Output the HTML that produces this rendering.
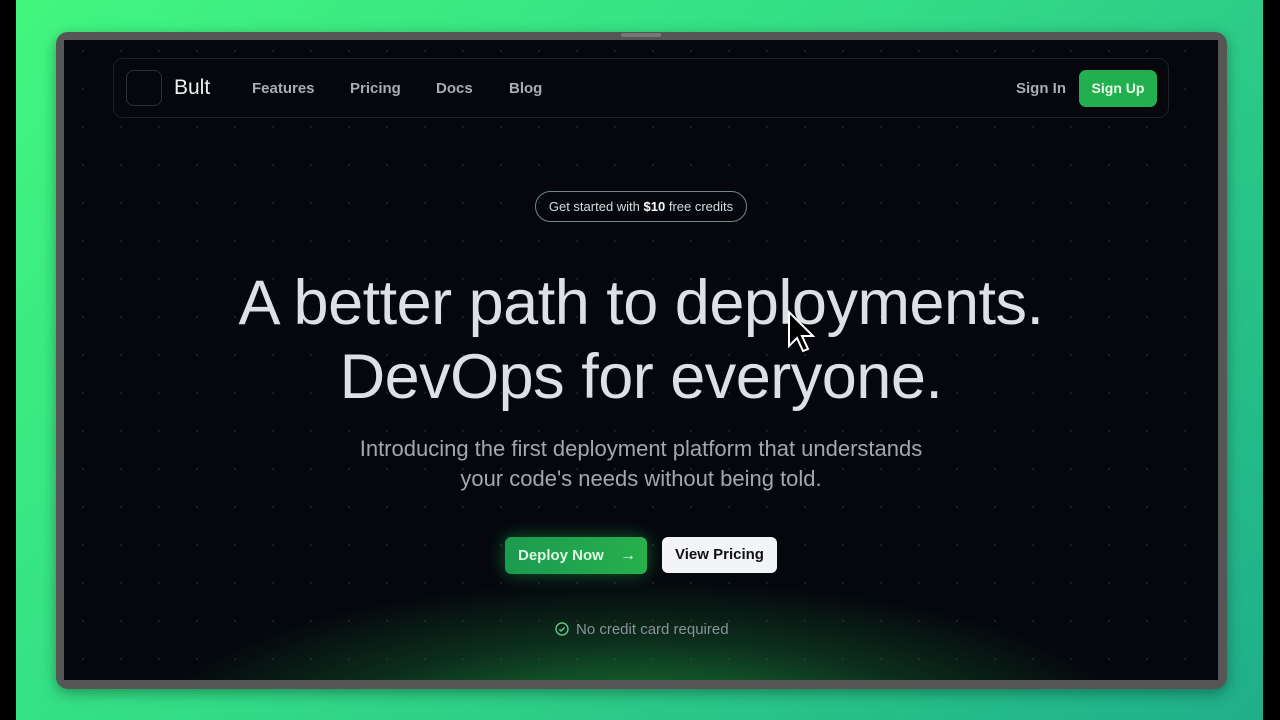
<!DOCTYPE html>
<html><head><meta charset="utf-8"><style>
*{margin:0;padding:0;box-sizing:border-box}
body{width:1280px;height:720px;overflow:hidden;background:#000;font-family:"Liberation Sans",sans-serif;position:relative}
.bg{position:absolute;left:16px;top:0;width:1247px;height:720px;background:linear-gradient(135deg,#42f67f 0%,#33dc86 45%,#1fae8a 100%)}
.frame{position:absolute;left:56px;top:32px;width:1171px;height:657px;background:#565656;border-radius:12px;box-shadow:0 4px 14px rgba(0,0,0,.35)}
.screen{position:absolute;left:64px;top:40px;width:1154px;height:640px;background:#05070d;overflow:hidden;
background-image:radial-gradient(circle,rgba(255,255,255,.09) 1px,transparent 1.3px);background-size:38px 38px;background-position:0 -8px}
.glow{position:absolute;left:0;right:0;bottom:-60px;height:200px;background:radial-gradient(ellipse 55% 100% at 50% 100%,rgba(35,190,80,.75),rgba(25,120,55,.35) 50%,transparent 80%)}
.nav{position:absolute;left:49px;top:18px;width:1056px;height:60px;border:1px solid #1d2128;border-radius:10px;background:#05070d}
.logo{position:absolute;left:12px;top:11px;width:36px;height:36px;border:1px solid #2a2e35;border-radius:8px}
.brand{position:absolute;left:60px;top:17px;color:#eef0f2;font-size:21px}
.nl{position:absolute;top:21px;color:#a9adb3;font-size:15px;font-weight:bold}
.su{position:absolute;left:965px;top:11px;width:78px;height:37px;background:#22b04f;border-radius:7px;color:#e8fbe9;font-weight:bold;font-size:14px;text-align:center;line-height:37px}
.pill{position:absolute;left:471px;top:151px;width:212px;height:31px;border:1px solid #6f8a80;border-radius:16px;color:#d8dadc;font-size:13px;text-align:center;line-height:29px}
h1{position:absolute;left:0;width:100%;text-align:center;color:#dde0e4;font-weight:normal;font-size:63px;line-height:74px;top:226px;letter-spacing:-.5px}
.sub{position:absolute;left:0;width:100%;top:394px;text-align:center;color:#a3a8ae;font-size:22px;line-height:30px}
.b1{position:absolute;left:441px;top:497px;width:142px;height:37px;background:linear-gradient(90deg,#1c9a4f,#26b04c);border-radius:6px;color:#dff8e4;font-weight:bold;font-size:15px;line-height:37px;padding-left:13px;box-shadow:0 0 18px rgba(40,200,90,.45)}
.b2{position:absolute;left:598px;top:497px;width:115px;height:36px;background:#f2f4f7;border-radius:6px;color:#111;font-weight:bold;font-size:15px;line-height:36px;text-align:center}
.nc{position:absolute;left:491px;top:581px;color:#8c9299;font-size:15px}
</style></head><body>
<div class="bg"></div>
<div class="frame"></div>
<div class="screen">
<div class="glow"></div>
<div class="nav">
<div class="logo"></div><div class="brand">Bult</div>
<div class="nl" style="left:138px">Features</div>
<div class="nl" style="left:236px">Pricing</div>
<div class="nl" style="left:322px">Docs</div>
<div class="nl" style="left:395px">Blog</div>
<div class="nl" style="left:902px">Sign In</div>
<div class="su">Sign Up</div>
</div>
<div class="pill">Get started with <b style="color:#fff">$10</b> free credits</div>
<h1>A better path to deployments.<br>DevOps for everyone.</h1>
<div class="sub">Introducing the first deployment platform that understands<br>your code's needs without being told.</div>
<div class="b1">Deploy Now <span style="margin-left:12px;font-size:16px;font-weight:bold">→</span></div>
<div class="b2">View Pricing</div>
<div class="nc"><svg width="14" height="14" viewBox="0 0 14 14" style="vertical-align:-2px;margin-right:7px"><circle cx="7" cy="7" r="6" fill="none" stroke="#5fc98a" stroke-width="1.4"/><path d="M4.3 7.2l1.8 1.8 3.6-3.6" fill="none" stroke="#5fc98a" stroke-width="1.4"/></svg>No credit card required</div>
</div>
<div style="position:absolute;left:621px;top:33px;width:40px;height:4px;background:#777;border-radius:2px"></div>
<svg style="position:absolute;left:787px;top:310px" width="28" height="44" viewBox="0 0 28 44"><path d="M2 2v34l8-8 6 13 5-2-6-13h11z" fill="#000" stroke="#fff" stroke-width="2"/></svg>
</body></html>
